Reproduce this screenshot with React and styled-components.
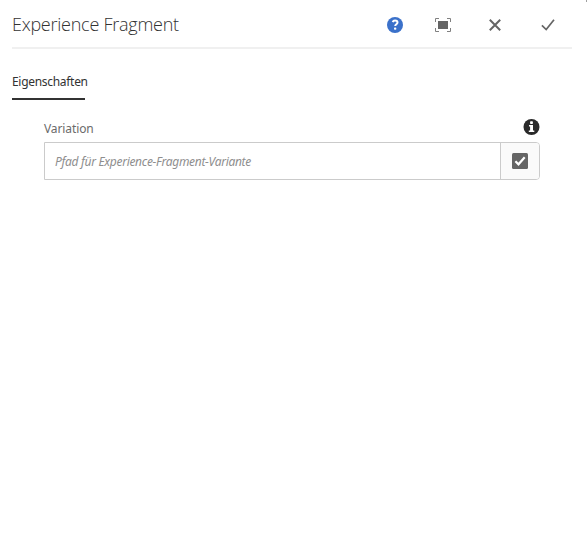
import React from 'react';
import styled, { createGlobalStyle } from 'styled-components';

const GlobalStyle = createGlobalStyle`
  *, *::before, *::after { box-sizing: border-box; }
  body { margin: 0; background: #fff; font-family: "Noto Sans", "Open Sans", sans-serif; }
`;

const Dialog = styled.main`
  position: relative;
  height: 556px;
  padding: 0 15px 0 12px;
  background: #fff;
  color: #4b4b4b;
  overflow: hidden;
`;

const CornerMark = styled.i`
  position: absolute;
  top: 0;
  right: 0;
  width: 1px;
  height: 2px;
  background: #a0a0a0;
`;

const Header = styled.header`
  display: flex;
  align-items: center;
  justify-content: space-between;
  height: 49px;
  border-bottom: 2px solid #f0f0f0;
`;

const Title = styled.h1`
  margin: 1px 0 0;
  font-family: "Open Sans", sans-serif;
  font-size: 18px;
  font-weight: 300;
  line-height: 24px;
  letter-spacing: -0.25px;
  white-space: nowrap;
  color: #323232;
`;

const Actions = styled.div`
  display: flex;
  align-items: center;
  gap: 32px;
  padding: 3px 15px 0 0;
`;

const IconButton = styled.button`
  display: flex;
  justify-content: center;
  width: ${(p) => p.$width || 20}px;
  padding: 0;
  border: 0;
  background: none;
`;

const Icon = styled.svg`
  display: block;
  flex: none;
`;

const Tabs = styled.nav`
  display: flex;
  margin-top: 23px;
`;

const Tab = styled.a`
  width: 73px;
  height: 28px;
  border-bottom: 2px solid #323232;
  font-size: 12px;
  line-height: 20px;
  letter-spacing: ${(p) => p.$tracking}px;
  white-space: nowrap;
  color: #323232;
`;

const Field = styled.section`
  width: 496px;
  margin: 19px 0 0 32px;
`;

const FieldHeader = styled.div`
  display: flex;
  justify-content: space-between;
  height: 23px;
`;

const Label = styled.label`
  font-size: 12px;
  line-height: 20px;
  letter-spacing: -0.1px;
  color: #6b6b6b;
`;

const InputGroup = styled.div`
  display: flex;
  height: 38px;
  border: 1px solid #cbcbcb;
  border-radius: 0 4px 4px 0;
  overflow: hidden;
`;

const PathInput = styled.input`
  flex: 1;
  min-width: 0;
  padding: 0 10px;
  border: 0;
  outline: 0;
  background: #fff;
  font: italic 12px "Noto Sans", sans-serif;
  letter-spacing: -0.3px;
  &::placeholder { color: #8e8e8e; opacity: 1; }
`;

const PickButton = styled.button`
  display: flex;
  align-items: center;
  justify-content: center;
  width: 39px;
  padding: 0;
  border: 0;
  border-left: 1px solid #cbcbcb;
  background: #fafafa;
`;

const HelpIcon = () => (
  <Icon width="16" height="16" viewBox="0 0 16 16">
    <circle cx="8" cy="8" r="8" fill="#3b71ca" />
    <path d="M5.7 5.1c.4-1.1 1.2-1.6 2.3-1.6 1.5 0 2.5.8 2.5 2 0 1.7-2.3 1.8-2.3 3.6" fill="none" stroke="#fff" strokeWidth="2" />
    <rect x="7" y="10.5" width="2.3" height="2.2" rx=".8" fill="#fff" />
  </Icon>
);

const FullscreenIcon = () => (
  <Icon width="16" height="14" viewBox="0 0 16 14">
    <path d="M.5 4V.5H4M12 .5h3.5V4M15.5 10v3.5H12M4 13.5H.5V10" fill="none" stroke="#808080" />
    <rect x="3" y="3" width="10" height="8" fill="#656565" />
  </Icon>
);

const CloseIcon = () => (
  <Icon width="12" height="12" viewBox="0 0 12 12">
    <path d="M.8.8l10.4 10.4M11.2.8L.8 11.2" stroke="#656565" strokeWidth="2" />
  </Icon>
);

const CheckIcon = () => (
  <Icon width="14" height="12" viewBox="0 0 14 12">
    <path d="M.9 6.3l4.3 4.2L13 .8" fill="none" stroke="#656565" strokeWidth="1.7" />
  </Icon>
);

const InfoIcon = () => (
  <Icon width="17" height="16" viewBox="0 0 17 16">
    <circle cx="8.5" cy="8" r="8" fill="#292929" />
    <rect x="7.1" y="2.2" width="2.8" height="2.7" rx=".7" fill="#fff" />
    <path d="M6 6h4v5.4h1.3V13H5.8v-1.6h1.3V7.6H6z" fill="#fff" />
  </Icon>
);

const CheckboxIcon = () => (
  <Icon width="16" height="16" viewBox="0 0 16 16">
    <rect width="16" height="16" rx="1.5" fill="#656565" />
    <path d="M3.4 8.2l3.1 3.1 6.2-7" fill="none" stroke="#fff" strokeWidth="2.2" />
  </Icon>
);

export default function App() {
  return (
    <>
      <GlobalStyle />
      <Dialog>
        <CornerMark />
        <Header>
          <Title>Experience Fragment</Title>
          <Actions>
            <IconButton $width={16} aria-label="Hilfe"><HelpIcon /></IconButton>
            <IconButton $width={16} aria-label="Vollbild"><FullscreenIcon /></IconButton>
            <IconButton $width={24} aria-label="Abbrechen"><CloseIcon /></IconButton>
            <IconButton $width={18} aria-label="Fertig"><CheckIcon /></IconButton>
          </Actions>
        </Header>
        <Tabs>
          <Tab $tracking={-0.3}>Eigenschaften</Tab>
        </Tabs>
        <Field>
          <FieldHeader>
            <Label htmlFor="variation">Variation</Label>
            <InfoIcon />
          </FieldHeader>
          <InputGroup>
            <PathInput id="variation" placeholder="Pfad für Experience-Fragment-Variante" />
            <PickButton aria-label="Auswählen"><CheckboxIcon /></PickButton>
          </InputGroup>
        </Field>
      </Dialog>
    </>
  );
}
